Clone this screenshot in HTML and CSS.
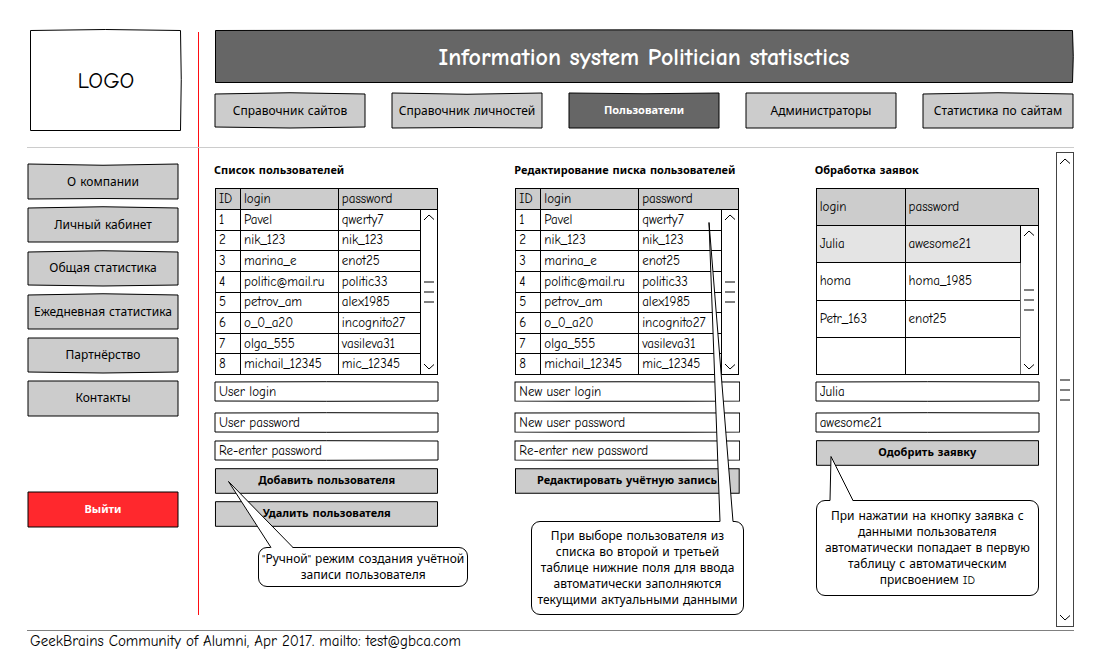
FILE: index.html
```html
<!DOCTYPE html>
<html lang="ru">
<head>
<meta charset="utf-8">
<meta name="viewport" content="width=device-width, initial-scale=1">
<title>Information system Politician statisctics</title>
<link rel="stylesheet" href="styles.css">
</head>
<body>
<svg class="defs" aria-hidden="true">
  <symbol id="up" viewBox="0 0 12 7"><path d="M1 6 6 1 11 5.500" fill="none" stroke="#000"/></symbol>
  <symbol id="down" viewBox="0 0 12 7"><path d="M1 1 6 6 11 1.500" fill="none" stroke="#000"/></symbol>
  <symbol id="grip" viewBox="0 0 12 22"><path d="M1 1H11M1 11H11M1 21H11" fill="none" stroke="#808080" stroke-width="2"/></symbol>
</svg>
<div class="page">
  <div class="logo">LOGO</div>
  <header class="top">
    <h1 class="banner">Information system Politician statisctics</h1>
    <nav class="tabs">
      <button class="btn bulge">Справочник сайтов</button>
      <button class="btn dent">Справочник личностей</button>
      <button class="btn active">Пользователи</button>
      <button class="btn">Администраторы</button>
      <button class="btn arch">Статистика по сайтам</button>
    </nav>
  </header>
  <div class="rule-v"></div>
  <div class="rule-h"></div>

  <aside class="side">
    <nav class="menu">
      <button class="btn dent">О компании</button>
      <button class="btn arch">Личный кабинет</button>
      <button class="btn bulge">Общая статистика</button>
      <button class="btn arch">Ежедневная статистика</button>
      <button class="btn sag">Партнёрство</button>
      <button class="btn">Контакты</button>
    </nav>
    <button class="btn exit">Выйти</button>
  </aside>

  <div class="content">
    <main class="columns">
      <section class="col">
        <h2 class="title">Список пользователей</h2>
        <table class="grid users">
          <colgroup><col class="c-id"><col class="c-login"><col><col class="c-scroll"></colgroup>
          <thead><tr><th>ID</th><th>login</th><th colspan="2">password</th></tr></thead>
          <tbody>
            <tr><td>1</td><td>Pavel</td><td>qwerty7</td><td class="track" rowspan="8"><div class="scroll"><svg class="arrow"><use href="#up"/></svg><svg class="grip"><use href="#grip"/></svg><svg class="arrow"><use href="#down"/></svg></div></td></tr>
            <tr><td>2</td><td>nik_123</td><td>nik_123</td></tr>
            <tr><td>3</td><td>marina_e</td><td>enot25</td></tr>
            <tr><td>4</td><td>politic@mail.ru</td><td>politic33</td></tr>
            <tr><td>5</td><td>petrov_am</td><td>alex1985</td></tr>
            <tr><td>6</td><td>o_0_a20</td><td>incognito27</td></tr>
            <tr><td>7</td><td>olga_555</td><td>vasileva31</td></tr>
            <tr><td>8</td><td>michail_12345</td><td>mic_12345</td></tr>
          </tbody>
        </table>
        <form class="form">
          <input class="field first" aria-label="User login" placeholder="User login">
          <input class="field" aria-label="User password" placeholder="User password">
          <input class="field" aria-label="Re-enter password" placeholder="Re-enter password">
          <button type="button" class="btn wide">Добавить пользователя</button>
          <button type="button" class="btn wide">Удалить пользователя</button>
        </form>
        <div class="note note-add">
          <svg class="tail" width="66" height="67" viewBox="0 0 66 67"><path class="tail-fill" d="M0 0 43 67H65Z"/><path class="tail-line" d="M43 66.500 .5 .5 65 66.500"/></svg>
          "Ручной" режим создания учётной<br>записи пользователя
        </div>
      </section>

      <section class="col">
        <h2 class="title">Редактирование писка пользователей</h2>
        <table class="grid users">
          <colgroup><col class="c-id"><col class="c-login"><col><col class="c-scroll"></colgroup>
          <thead><tr><th>ID</th><th>login</th><th colspan="2">password</th></tr></thead>
          <tbody>
            <tr><td>1</td><td>Pavel</td><td>qwerty7</td><td class="track" rowspan="8"><div class="scroll"><svg class="arrow"><use href="#up"/></svg><svg class="grip"><use href="#grip"/></svg><svg class="arrow"><use href="#down"/></svg></div></td></tr>
            <tr><td>2</td><td>nik_123</td><td>nik_123</td></tr>
            <tr><td>3</td><td>marina_e</td><td>enot25</td></tr>
            <tr><td>4</td><td>politic@mail.ru</td><td>politic33</td></tr>
            <tr><td>5</td><td>petrov_am</td><td>alex1985</td></tr>
            <tr><td>6</td><td>o_0_a20</td><td>incognito27</td></tr>
            <tr><td>7</td><td>olga_555</td><td>vasileva31</td></tr>
            <tr><td>8</td><td>michail_12345</td><td>mic_12345</td></tr>
          </tbody>
        </table>
        <form class="form">
          <input class="field first" aria-label="New user login" placeholder="New user login">
          <input class="field" aria-label="New user password" placeholder="New user password">
          <input class="field" aria-label="Re-enter new password" placeholder="Re-enter new password">
          <button type="button" class="btn wide">Редактировать учётную запись</button>
        </form>
        <div class="note note-edit">
          <svg class="tail" width="26" height="300" viewBox="0 0 26 300"><path class="tail-fill" d="M1 0 12 300H25Z"/><path class="tail-line" d="M12 299.500 1 .5 25 299.500"/></svg>
          При выборе пользователя из<br>списка во второй и третьей<br>таблице нижние поля для ввода<br>автоматически заполняются<br>текущими актуальными данными
        </div>
      </section>

      <section class="col">
        <h2 class="title">Обработка заявок</h2>
        <table class="grid requests">
          <colgroup><col class="c-name"><col><col class="c-scroll wide-track"></colgroup>
          <thead><tr><th>login</th><th colspan="2">password</th></tr></thead>
          <tbody>
            <tr><td class="picked">Julia</td><td class="picked">awesome21</td><td class="track" rowspan="4"><div class="scroll"><svg class="arrow"><use href="#up"/></svg><svg class="grip"><use href="#grip"/></svg><svg class="arrow"><use href="#down"/></svg></div></td></tr>
            <tr><td>homa</td><td>homa_1985</td></tr>
            <tr><td>Petr_163</td><td>enot25</td></tr>
            <tr><td></td><td></td></tr>
          </tbody>
        </table>
        <form class="form">
          <input class="field first" aria-label="login" value="Julia">
          <input class="field" aria-label="password" value="awesome21">
          <button type="button" class="btn wide">Одобрить заявку</button>
        </form>
        <div class="note note-approve">
          <svg class="tail" width="26" height="45" viewBox="0 0 26 45"><path class="tail-fill" d="M2 0 1 45H24Z"/><path class="tail-line" d="M1 44.500 2 .5 24 44.500"/></svg>
          При нажатии на кнопку заявка с<br>данными пользователя<br>автоматически попадает в первую<br>таблицу с автоматическим<br>присвоением ID
        </div>
      </section>
    </main>
    <div class="page-scroll"><svg class="arrow"><use href="#up"/></svg><svg class="grip"><use href="#grip"/></svg><svg class="arrow"><use href="#down"/></svg></div>
  </div>

  <footer class="foot">GeekBrains Community of Alumni, Apr 2017. mailto: test@gbca.com</footer>
</div>
</body>
</html>
```
FILE: styles.css
```css
* { box-sizing: border-box; }

:root {
  --flat: url("data:image/svg+xml,%3Csvg xmlns='http://www.w3.org/2000/svg' viewBox='0 0 152 37' preserveAspectRatio='none'%3E%3Cpath d='M1 1H151V36H1Z' fill='%23ccc' stroke='%23000' vector-effect='non-scaling-stroke'/%3E%3C/svg%3E");
  --dent: url("data:image/svg+xml,%3Csvg xmlns='http://www.w3.org/2000/svg' viewBox='0 0 152 37' preserveAspectRatio='none'%3E%3Cpath d='M1 1Q76 3.500 151 1V36Q76 35 1 36Z' fill='%23ccc' stroke='%23000' vector-effect='non-scaling-stroke'/%3E%3C/svg%3E");
  --arch: url("data:image/svg+xml,%3Csvg xmlns='http://www.w3.org/2000/svg' viewBox='0 0 152 37' preserveAspectRatio='none'%3E%3Cpath d='M1 2Q76 -.5 151 2V36H1Z' fill='%23ccc' stroke='%23000' vector-effect='non-scaling-stroke'/%3E%3C/svg%3E");
  --bulge: url("data:image/svg+xml,%3Csvg xmlns='http://www.w3.org/2000/svg' viewBox='0 0 152 37' preserveAspectRatio='none'%3E%3Cpath d='M1 2Q76 -.5 151 2V35Q76 37 1 35Z' fill='%23ccc' stroke='%23000' vector-effect='non-scaling-stroke'/%3E%3C/svg%3E");
  --sag: url("data:image/svg+xml,%3Csvg xmlns='http://www.w3.org/2000/svg' viewBox='0 0 152 37' preserveAspectRatio='none'%3E%3Cpath d='M1 1H151V35Q76 37 1 35Z' fill='%23ccc' stroke='%23000' vector-effect='non-scaling-stroke'/%3E%3C/svg%3E");
  --dark: url("data:image/svg+xml,%3Csvg xmlns='http://www.w3.org/2000/svg' viewBox='0 0 152 37' preserveAspectRatio='none'%3E%3Cpath d='M1 1Q76 2.500 151 1V36H1Z' fill='%23666' stroke='%23000' vector-effect='non-scaling-stroke'/%3E%3C/svg%3E");
  --red: url("data:image/svg+xml,%3Csvg xmlns='http://www.w3.org/2000/svg' viewBox='0 0 152 37' preserveAspectRatio='none'%3E%3Cpath d='M1 1H151V36H1Z' fill='%23ff282d' stroke='%23000' vector-effect='non-scaling-stroke'/%3E%3C/svg%3E");
  --field: url("data:image/svg+xml,%3Csvg xmlns='http://www.w3.org/2000/svg' viewBox='0 0 225 21' preserveAspectRatio='none'%3E%3Cpath d='M1 1Q112 .4 224 1V20Q112 20.600 1 20Z' fill='%23fff' stroke='%23000' vector-effect='non-scaling-stroke'/%3E%3C/svg%3E");
  --logo: url("data:image/svg+xml,%3Csvg xmlns='http://www.w3.org/2000/svg' viewBox='0 0 152 102' preserveAspectRatio='none'%3E%3Cpath d='M.5 1.500Q75 -.5 150.500 1.500Q152 50 150.500 101.500H.5Z' fill='%23fff' stroke='%23000' vector-effect='non-scaling-stroke'/%3E%3C/svg%3E");
  --banner: url("data:image/svg+xml,%3Csvg xmlns='http://www.w3.org/2000/svg' viewBox='0 0 860 54' preserveAspectRatio='none'%3E%3Cpath d='M1.500 1.500Q430 .2 858.500 1.500Q860 27 858.500 53.500H1.500Z' fill='%23666' stroke='%23000' vector-effect='non-scaling-stroke'/%3E%3C/svg%3E");
}

body {
  margin: 0;
  background: #fff;
  color: #000;
  font: 12px/16px "Comic Sans MS", "Comic Neue", "Noto Sans", sans-serif;
}

.defs { display: none; }

.page {
  display: grid;
  grid-template-columns: 171px 1px minmax(0, 1fr);
  grid-template-rows: 118px 1px 1fr auto;
  min-height: 100vh;
  padding: 29px 32px 0 27px;
}

.logo {
  grid-area: 1 / 1;
  display: flex;
  align-items: center;
  justify-content: center;
  width: 152px;
  height: 102px;
  padding-top: 2px;
  margin-left: 3px;
  background: var(--logo) 0 0 / 100% 100% no-repeat;
  font-size: 23px;
}

.top { grid-area: 1 / 3; padding-left: 15px; }

.banner {
  display: flex;
  align-items: center;
  justify-content: center;
  height: 54px;
  padding-top: 2px;
  margin: 0 0 9px;
  background: var(--banner) 0 0 / 100% 100% no-repeat;
  color: #fff;
  font-size: 24px;
  line-height: 28px;
}

.tabs { display: flex; justify-content: space-between; gap: 8px; }
.tabs .btn { flex: 0 1 152px; }

.btn {
  height: 37px;
  padding: 0;
  border: 0;
  background: var(--flat) 0 0 / 100% 100% no-repeat;
  color: inherit;
  font: inherit;
  white-space: nowrap;
}
.dent { background-image: var(--dent); }
.arch { background-image: var(--arch); }
.bulge { background-image: var(--bulge); }
.sag { background-image: var(--sag); }
.active, .exit, .wide { font-size: 11px; font-weight: 700; }
.active { background-image: var(--dark); color: #fff; }
.exit { width: 152px; background-image: var(--red); color: #fff; }
.wide { height: 26px; }

.rule-v { grid-area: 1 / 2 / 4 / 3; margin: 3px 0 15px; background: #ff0d12; }
.rule-h { grid-area: 2 / 1 / 3 / 4; background: #ccc; }

.side { grid-area: 3 / 1; padding-top: 15px; }
.menu {
  display: grid;
  align-content: space-between;
  width: 152px;
  height: 254px;
  margin-bottom: 74px;
}

.content {
  grid-area: 3 / 3;
  display: flex;
  gap: 16px;
  padding: 4px 0 3px 15px;
}
.columns {
  flex: 1;
  display: grid;
  grid-template-columns: repeat(3, minmax(0, 1fr));
  gap: 75px;
  padding-top: 11px;
}
.col { min-width: 0; }

.title {
  margin: 0 -4px 9px 0;
  font-size: 11px;
  line-height: 16px;
  white-space: nowrap;
}

.grid {
  width: calc(100% - 2px);
  height: 187px;
  margin-left: 1px;
  border-collapse: collapse;
  table-layout: fixed;
  font-size: 13px;
  line-height: 16px;
}
.grid th, .grid td {
  padding: 0 0 0 3px;
  border: 1px solid #000;
  text-align: left;
  font-weight: 400;
  white-space: nowrap;
}
.grid th { background: #ccc; }
.grid .picked { background: #e4e4e4; }
.c-id { width: 25px; }
.c-login { width: 44%; }
.c-name { width: 40%; }
.c-scroll { width: 17px; }
.wide-track { width: 18px; }
.users thead tr { height: 21px; }
.requests tr { height: 37px; }

.grid .track { padding: 0; }
.scroll, .page-scroll {
  display: flex;
  flex-direction: column;
  align-items: center;
  justify-content: space-between;
}
.scroll { height: 140px; }
.users .scroll { height: 156px; }
.requests .track { border-left-color: #666; }
.arrow { width: 12px; height: 7px; }
.grip { width: 12px; height: 22px; }
.page-scroll {
  width: 18px;
  padding: 5px 0;
  border: 1px solid #444;
}

.form { display: grid; gap: 7px; margin-top: 6px; }
.field {
  width: 100%;
  height: 21px;
  padding: 0 5px;
  border: 0;
  background: var(--field) 0 0 / 100% 100% no-repeat;
  color: #000;
  font: inherit;
  font-size: 13px;
}
.field::placeholder { color: #000; opacity: 1; }
.first { margin-bottom: 3px; }

.note {
  position: relative;
  padding: 3px 0;
  border: 1px solid #000;
  border-radius: 9px;
  background: #fff;
  text-align: center;
  white-space: nowrap;
}
.note-add { margin: 20px -29px 0 44px; }
.note-edit { margin: 27px -4px 0 17px; padding: 6px 0; }
.note-approve { margin: 34px 1px 0; padding: 7px 0; }
.tail { position: absolute; bottom: 100%; }
.note-add .tail { left: -31px; }
.note-edit .tail { right: 9px; }
.note-approve .tail { left: 12px; }
.tail-fill { fill: #fff; }
.tail-line { fill: none; stroke: #000; }

.foot {
  grid-area: 4 / 1 / 5 / 4;
  padding: 0 3px 11px;
  border-top: 1px solid #808080;
  font-size: 15px;
  line-height: 20px;
}
```
